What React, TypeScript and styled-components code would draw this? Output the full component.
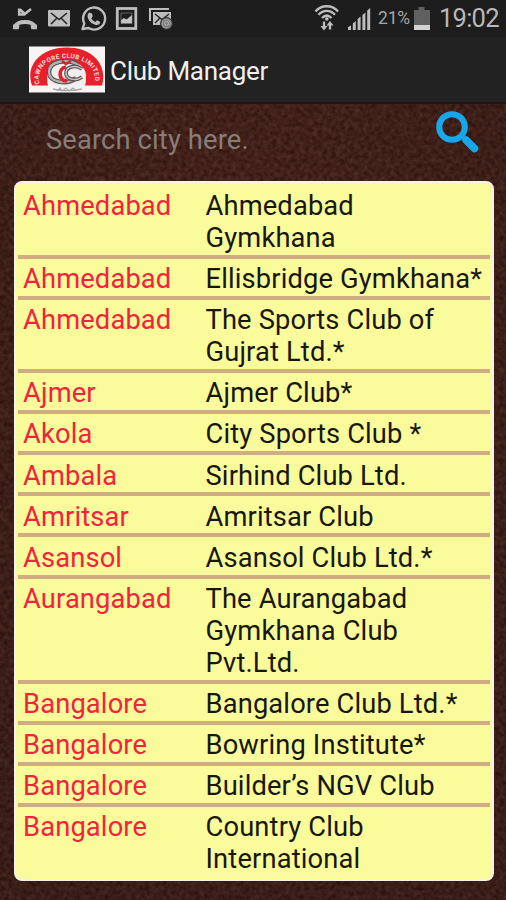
import React from 'react';
import styled, { createGlobalStyle } from 'styled-components';

const GlobalStyle = createGlobalStyle`
  * { box-sizing: border-box; }
  body { margin: 0; background: #3b1d16; }
`;

const Screen = styled.div`
  position: relative;
  width: 506px;
  height: 900px;
  overflow: hidden;
  display: flex;
  flex-direction: column;
  font-family: Roboto, "Liberation Sans", sans-serif;
  background: #3b1d16;
`;

const Texture = styled.svg`
  position: absolute;
  inset: 0;
  width: 100%;
  height: 100%;
`;

const StatusBar = styled.header`
  position: relative;
  height: 37px;
  flex: none;
  display: flex;
  justify-content: space-between;
  background: #1d1d1d;
  color: #b9b9b9;
`;

const StatusText = styled.span<{ $size: number; $spacing: number }>`
  font-size: ${(p) => p.$size}px;
  letter-spacing: ${(p) => p.$spacing}px;
  line-height: 37px;
  white-space: nowrap;
`;

const StatusGroup = styled.div`
  display: flex;
  height: 37px;
  align-items: center;
`;

const Percent = styled(StatusText)`
  width: 35px;
  margin-left: 6px;
  color: #a6a6a6;
`;

const Clock = styled(StatusText)`
  width: 67px;
  margin-left: 8px;
`;

const TitleBar = styled.div`
  position: relative;
  flex: none;
  height: 67px;
  display: flex;
  align-items: center;
  padding: 0 0 1px 28px;
  gap: 5px;
  background: #222;
  border-bottom: 2px solid #1b1716;
`;

const Title = styled.h1`
  margin: 3px 0 0;
  font-size: 26px;
  font-weight: 400;
  line-height: 32px;
  letter-spacing: -0.25px;
  color: #f0f0f0;
`;

const SearchRow = styled.div`
  position: relative;
  flex: none;
  height: 77px;
  display: flex;
  justify-content: space-between;
  padding: 6px 26px 0 46px;
`;

const SearchInput = styled.input`
  width: 340px;
  height: 60px;
  padding: 0;
  border: 0;
  outline: 0;
  background: transparent;
  font: 400 27.3px/32px Roboto, "Liberation Sans", sans-serif;
  letter-spacing: 0.14px;
  color: #ddd;
  &::placeholder { color: #877d79; opacity: 1; }
`;

const List = styled.ul`
  position: relative;
  flex: none;
  width: 480px;
  height: 700px;
  margin: 0 0 0 14px;
  padding: 2.8px 2px 0;
  list-style: none;
  background: #fafb9b;
  border: 2px solid #f6f0ee;
  border-radius: 8px;
`;

const Row = styled.li`
  display: grid;
  grid-template-columns: 182.5px 1fr;
  padding: 4.3px 0 0.8px 5px;
  border-bottom: 4px solid #cfac83;
  font-size: 27.3px;
  line-height: 32px;
  letter-spacing: 0.15px;
  &:last-child { border-bottom: 0; }
`;

const City = styled.span`
  color: #f5223d;
  white-space: nowrap;
`;

const Club = styled.span`
  color: #17170b;
  white-space: pre-line;
`;

const clubs: [string, string][] = [
  ['Ahmedabad', 'Ahmedabad\nGymkhana'],
  ['Ahmedabad', 'Ellisbridge Gymkhana*'],
  ['Ahmedabad', 'The Sports Club of\nGujrat Ltd.*'],
  ['Ajmer', 'Ajmer Club*'],
  ['Akola', 'City Sports Club *'],
  ['Ambala', 'Sirhind Club Ltd.'],
  ['Amritsar', 'Amritsar Club'],
  ['Asansol', 'Asansol Club Ltd.*'],
  ['Aurangabad', 'The Aurangabad\nGymkhana Club\nPvt.Ltd.'],
  ['Bangalore', 'Bangalore Club Ltd.*'],
  ['Bangalore', 'Bowring Institute*'],
  ['Bangalore', 'Builder’s NGV Club'],
  ['Bangalore', 'Country Club\nInternational'],
];

const NotificationIcons = () => (
  <svg width="180" height="37" viewBox="0 0 180 37" fill="none">
    <path d="M15 26.500C18 20.500 32 20.500 35 26.500" stroke="#bdbdbd" strokeWidth="4" />
    <path d="M13 24.500l6.500 1-.8 3.800H13zM37 24.500l-6.500 1 .8 3.800H37z" fill="#bdbdbd" />
    <path d="M19.200 8.500v6h6M20 9.500l4.800 4.500 6.200-5" stroke="#bdbdbd" strokeWidth="2.600" />
    <rect x="48" y="10" width="22" height="16.500" rx="1" fill="#bdbdbd" />
    <path d="M51 13l8 6.500 8-6.500M51 24l5.500-5.500M67 24l-5.500-5.500" stroke="#222" strokeWidth="1.500" />
    <path d="M82.500 29l1.800-5.500A11 11 0 1 1 88.500 28z" stroke="#bdbdbd" strokeWidth="2.400" strokeLinejoin="round" />
    <path d="M89.500 12.500l2.500 1 .8 3-1.500 1.800c1 2 2.200 3 4 3.700l1.800-1.700 3 1.500c.3 2.500-2 3.500-4 3.200-4.500-.8-8.300-4.800-8.600-9 0-1.500.8-3 2-3.500z" fill="#bdbdbd" />
    <rect x="117.300" y="8.500" width="18.500" height="20" stroke="#bdbdbd" strokeWidth="2.800" />
    <path d="M121 23.500V20l3-2 2.500 1.500L132 15v8.500z" fill="#c4c4c4" />
    <path d="M121 23.500V13h11v10.500" stroke="#8f8f8f" strokeWidth=".6" />
    <path d="M150 21V9h19" stroke="#bdbdbd" strokeWidth="2" />
    <rect x="153" y="12" width="18" height="13" fill="#bdbdbd" />
    <path d="M155 14l7 5.500 7-5.500M155 23l5-5" stroke="#242424" strokeWidth="1.400" />
    <circle cx="166.500" cy="23.500" r="6" fill="#777" stroke="#2a2a2a" />
    <circle cx="166.500" cy="23.500" r="1.900" stroke="#bbb" />
    <path d="M168.500 21.500v3.200c1.500 1 2.300-.6 2-2-1-4.500-8-4-8 .9 0 4 4 4.700 6 3.200" stroke="#aaa" strokeWidth=".9" />
  </svg>
);

const SignalIcons = () => (
  <svg width="58" height="37" viewBox="314 0 58 37" fill="none">
    <g stroke="#bdbdbd" strokeWidth="2.400">
      <path d="M315.500 11.500C321 4.500 332.500 4.500 338 11.500" />
      <path d="M318.500 14.800C323 9.500 330.500 9.500 335 14.800" />
      <path d="M322 18C325 15 328.500 15 331.500 18" />
    </g>
    <circle cx="326.800" cy="19" r="1.800" fill="#bdbdbd" />
    <path d="M324 21.500v6M330 29.500v-6" stroke="#bdbdbd" strokeWidth="2.300" />
    <path d="M320.500 26h7l-3.500 4.500zM326.500 25.500h7l-3.500-4.500z" fill="#bdbdbd" />
    <path d="M348 30v-3l3-1.500V30zM352.800 30v-6.500l3-2.500V30zM357.600 30V19l3-2.500V30zM362.400 30V15l3-2.500V30zM367.200 30V10.500l3-2.500v22z" fill="#bdbdbd" />
  </svg>
);

const BatteryIcon = () => (
  <svg width="18" height="37" viewBox="0 0 18 37">
    <path d="M1 10h4.500V7h6v3H17v20H1z" fill="#606060" />
    <path d="M1 25h16v5H1z" fill="#d2d2d2" />
  </svg>
);

const ClubLogo = () => (
  <svg width="77" height="47" viewBox="0 0 77 47" fill="none">
    <path d="M1 0.500h76v46H1z" fill="#f8f4f4" />
    <path d="M4 39.500C-3 20 12 1.500 38.800 1.500S80 20 74 39.500H57C66 12 12 12 20 39.500z" fill="#e8202a" />
    <defs><path id="logoArc" d="M12 39C1 3 76 3 66 39" /></defs>
    <text fill="#fbdcdc" fontFamily="Roboto, sans-serif" fontSize="6.400" fontWeight="700" letterSpacing="0.35">
      <textPath href="#logoArc" startOffset="1">CAWNPORE CLUB LIMITED</textPath>
    </text>
    <ellipse cx="38.500" cy="29" rx="19.500" ry="14" fill="#f3eeee" />
    <path d="M50 19c-10-7-29-4-29 7 0 11 19 13 27 6" stroke="#555" strokeWidth="4.500" />
    <path d="M50 19c-10-7-29-4-29 7 0 11 19 13 27 6" stroke="#b5b0b0" strokeWidth="2.300" />
    <path d="M54 23c-7-5-16-2-16 4s9 9 16 4" stroke="#5d5555" strokeWidth="3.800" />
    <path d="M54 23c-7-5-16-2-16 4s9 9 16 4" stroke="#c9c3c3" strokeWidth="1.500" />
    <path d="M38 21c-8 1-8 14 1 14" stroke="#e1202a" strokeWidth="3.600" />
    <path d="M34 15l4 3 5-3" stroke="#d5222c" strokeWidth="2.500" />
    <path d="M25 43c8 2 20 2 29 0M29 45l3-3 2 3 4-3 3 3 4-3 3 3" stroke="#aaa" strokeWidth="1.300" />
  </svg>
);

const SearchIcon = () => (
  <svg width="46" height="46" viewBox="0 0 46 46" fill="none">
    <circle cx="18" cy="17" r="12.800" stroke="#18a7ea" strokeWidth="6" />
    <path d="M32 30l8.500 8.500" stroke="#18a7ea" strokeWidth="7.500" strokeLinecap="round" />
  </svg>
);

const LeatherTexture = () => (
  <Texture aria-hidden="true">
    <defs>
      <filter id="leather" x="0" y="0" width="100%" height="100%" colorInterpolationFilters="sRGB">
        <feTurbulence type="fractalNoise" baseFrequency="0.22" numOctaves="3" seed="7" />
        <feColorMatrix values="0.19 0 0 0 0.17  0.16 0 0 0 0.055  0.15 0 0 0 0.03  0 0 0 0 1" />
      </filter>
      <radialGradient id="shade" cx="50%" cy="35%" r="70%">
        <stop offset="0" stopColor="#000" stopOpacity="0" />
        <stop offset="1" stopColor="#000" stopOpacity="0.15" />
      </radialGradient>
    </defs>
    <rect width="100%" height="100%" filter="url(#leather)" />
    <rect width="100%" height="100%" fill="url(#shade)" />
  </Texture>
);

export default function App() {
  return (
    <>
      <GlobalStyle />
      <Screen>
        <LeatherTexture />
        <StatusBar>
          <NotificationIcons />
          <StatusGroup>
            <SignalIcons />
            <Percent $size={17.5} $spacing={-0.2}>21%</Percent>
            <BatteryIcon />
            <Clock $size={25.5} $spacing={-0.75}>19:02</Clock>
          </StatusGroup>
        </StatusBar>
        <TitleBar>
          <ClubLogo />
          <Title>Club Manager</Title>
        </TitleBar>
        <SearchRow>
          <SearchInput placeholder="Search city here." />
          <SearchIcon />
        </SearchRow>
        <List>
          {clubs.map(([city, club], i) => (
            <Row key={i}>
              <City>{city}</City>
              <Club>{club}</Club>
            </Row>
          ))}
        </List>
      </Screen>
    </>
  );
}
